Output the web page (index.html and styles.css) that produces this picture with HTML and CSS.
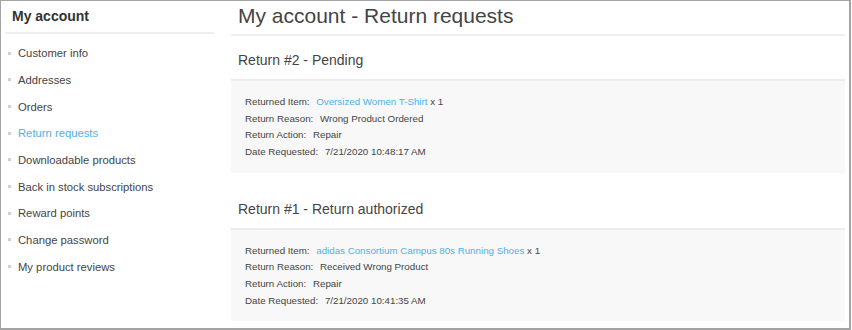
FILE: index.html
```html
<!DOCTYPE html>
<html lang="en">
<head>
  <meta charset="UTF-8">
  <meta name="viewport" content="width=device-width, initial-scale=1.0">
  <title>My account - Return requests</title>
  <link rel="stylesheet" href="styles.css">
</head>
<body>
  <div class="frame">
    <!-- Navegación lateral de la cuenta -->
    <div class="side">
      <div class="side-title">My account</div>
      <ul class="side-list">
        <li>Customer info</li>
        <li>Addresses</li>
        <li>Orders</li>
        <li class="active">Return requests</li>
        <li>Downloadable products</li>
        <li>Back in stock subscriptions</li>
        <li>Reward points</li>
        <li>Change password</li>
        <li>My product reviews</li>
      </ul>
    </div>

    <div class="main">
      <h1 class="page-title">My account - Return requests</h1>

      <div class="request">
        <div class="request-title">Return #2 - Pending</div>
        <div class="request-box">
          <div class="row"><span class="label">Returned Item:</span> <a class="item-link">Oversized Women T-Shirt</a> x 1</div>
          <div class="row"><span class="label">Return Reason:</span> Wrong Product Ordered</div>
          <div class="row"><span class="label">Return Action:</span> Repair</div>
          <div class="row"><span class="label">Date Requested:</span> 7/21/2020 10:48:17 AM</div>
        </div>
      </div>

      <div class="request">
        <div class="request-title">Return #1 - Return authorized</div>
        <div class="request-box">
          <div class="row"><span class="label">Returned Item:</span> <a class="item-link">adidas Consortium Campus 80s Running Shoes</a> x 1</div>
          <div class="row"><span class="label">Return Reason:</span> Received Wrong Product</div>
          <div class="row"><span class="label">Return Action:</span> Repair</div>
          <div class="row"><span class="label">Date Requested:</span> 7/21/2020 10:41:35 AM</div>
        </div>
      </div>
    </div>
  </div>
</body>
</html>
```

FILE: styles.css
```css
body {
  margin: 0;
  background-color: #fff;
  font-family: "Liberation Sans", Arial, sans-serif;
  color: #444;
}

.frame {
  display: flex;
  width: 851px;
  height: 330px;
  box-sizing: border-box;
  border: 1px solid #a3a3a3;
  border-right-width: 2px;
  border-bottom-width: 2px;
  overflow: hidden;
}

.side {
  width: 209px;
  margin-left: 4px;
  flex-shrink: 0;
}

.side-title {
  height: 31px;
  line-height: 30px;
  padding-left: 7px;
  font-size: 14px;
  font-weight: bold;
  color: #333;
  border-bottom: 2px solid #eeeeee;
}

.side-list {
  list-style: none;
  margin: 0;
  padding: 6px 0 0 0;
}

.side-list li {
  display: flex;
  align-items: center;
  height: 26.67px;
  font-size: 11.25px;
  color: #444;
}

.side-list li::before {
  content: "";
  width: 3px;
  height: 3px;
  margin-left: 3px;
  margin-right: 7px;
  background-color: #d0d0d0;
}

.side-list li.active {
  color: #4ab2f1;
}

.main {
  flex: 1;
  padding: 0 4px 0 17px;
}

.page-title {
  margin: 0;
  height: 33px;
  line-height: 29px;
  padding-left: 7px;
  font-size: 21px;
  font-weight: normal;
  color: #444;
  border-bottom: 2px solid #eeeeee;
}

.request + .request {
  margin-top: 12px;
}

.request-title {
  padding: 14px 0 9px 7px;
  line-height: 20px;
  font-size: 14px;
  color: #444;
}

.request-box {
  background-color: #f8f8f8;
  border-top: 2px solid #ececec;
  padding: 13px 13px 12px 14px;
}

.row {
  font-size: 9.75px;
  line-height: 16.67px;
  color: #444;
}

.label {
  margin-right: 4px;
}

.item-link {
  color: #4ab2f1;
  text-decoration: none;
}
```
